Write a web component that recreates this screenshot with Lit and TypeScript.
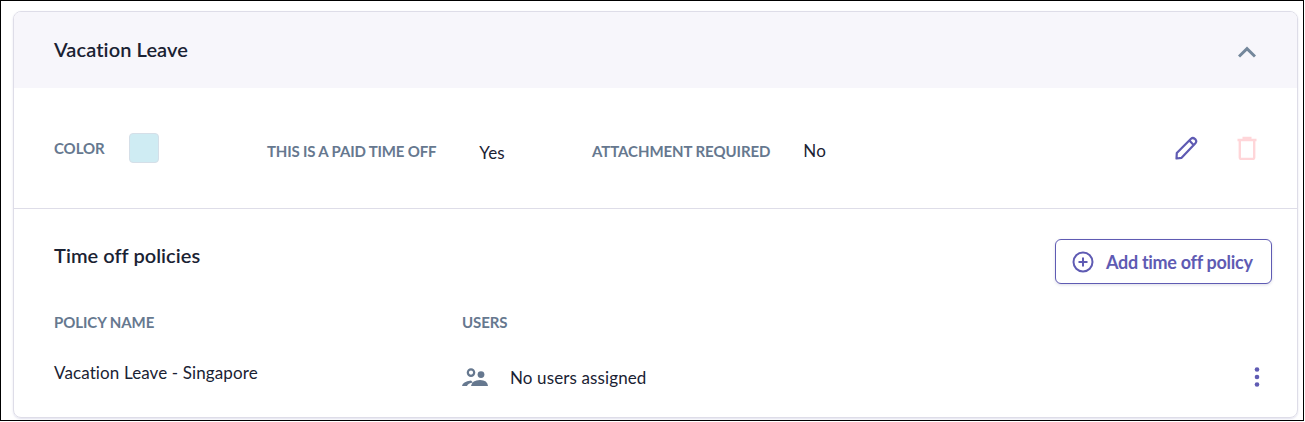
import { LitElement, html, css } from "lit";
import { customElement } from "lit/decorators.js";

@customElement("app-root")
export class AppRoot extends LitElement {
  static styles = css`
    :host {
      display: block;
      width: 1305px;
      height: 422px;
      overflow: hidden;
      background: #fff;
      font-family: Lato, "Liberation Sans", sans-serif;
      color: #1a2233;
    }
    .frame {
      box-sizing: border-box;
      width: 1304px;
      height: 421px;
      border: 1px solid #000;
      padding: 10px 5px 2px 12px;
    }
    .card {
      box-sizing: border-box;
      height: 407px;
      border: 1px solid #dedde8;
      border-radius: 8px;
      box-shadow: 0 1px 2px rgba(90, 90, 160, 0.18);
      overflow: hidden;
      display: flex;
      flex-direction: column;
    }
    .head {
      height: 76px;
      flex: none;
      background: #f7f6fb;
      display: flex;
      align-items: center;
      justify-content: space-between;
      padding: 0 41px 0 40px;
    }
    h2 {
      margin: 0 0 3px;
      font-size: 20px;
      line-height: 24px;
      letter-spacing: 0.1px;
      font-weight: 600;
    }
    .chev { margin-top: 4px; }
    .info {
      height: 120px;
      flex: none;
      border-bottom: 1px solid #dedde8;
      display: flex;
      align-items: center;
      padding: 0 39px 0 40px;
    }
    .label {
      font-size: 15px;
      font-weight: 700;
      color: #66788f;
      line-height: 18px;
      letter-spacing: -0.08px;
      white-space: nowrap;
    }
    .value {
      font-size: 17px;
      line-height: 22px;
      letter-spacing: 0.12px;
      white-space: nowrap;
    }
    .swatch {
      width: 30px;
      height: 30px;
      box-sizing: border-box;
      border-radius: 4px;
      background: #cfecf3;
      border: 1px solid #d5dfe8;
    }
    .color { display: flex; gap: 24px; align-items: flex-start; width: 213px; }
    .color .label { margin-top: 6px; }
    .paid { display: flex; gap: 43px; align-items: center; width: 325px; margin-top: 6px; }
    .paid .label { letter-spacing: -0.17px; }
    .paid .value { margin-top: 3px; }
    .attach { display: flex; gap: 33px; align-items: center; margin-top: 5px; }
    .actions { margin-left: auto; display: flex; gap: 38px; align-items: center; margin-top: -1px; }
    svg { display: block; flex: none; }
    .policies { flex: 1; padding: 30px 25px 0 40px; display: flex; flex-direction: column; }
    .ptop { display: flex; justify-content: space-between; align-items: flex-start; }
    .ptop h3 { margin: 4px 0 0; font-size: 20px; line-height: 24px; font-weight: 600; letter-spacing: 0.05px; }
    .btn {
      box-sizing: border-box;
      width: 217px;
      height: 45px;
      border: 1px solid #5f5bb3;
      border-radius: 6px;
      background: #fff;
      box-shadow: 0 1px 3px rgba(60, 60, 120, 0.18);
      display: flex;
      align-items: center;
      padding: 0 0 0 16px;
      gap: 12px;
      color: #5f5bb3;
      font: 700 18px/24px Lato, sans-serif;
      letter-spacing: -0.3px;
    }
    .row { display: grid; grid-template-columns: 408px 1fr auto; }
    .hdr { margin-top: 29px; }
    .body { margin-top: 30px; align-items: center; padding-right: 12px; }
    .users { display: flex; align-items: center; gap: 22px; margin-top: 6px; }
    .name { margin-top: -4px; }
    .more { margin-top: 4px; }
  `;

  render() {
    return html`
      <div class="frame">
        <div class="card">
          <div class="head">
            <h2>Vacation Leave</h2>
            <svg class="chev" width="18" height="12" viewBox="0 0 18 12" fill="none" stroke="#74879b" stroke-width="3"><path d="M1 10.5 L9 2.6 L17 10.5"/></svg>
          </div>
          <div class="info">
            <div class="color"><span class="label">COLOR</span><div class="swatch"></div></div>
            <div class="paid"><span class="label">THIS IS A PAID TIME OFF</span><span class="value">Yes</span></div>
            <div class="attach"><span class="label">ATTACHMENT REQUIRED</span><span class="value">No</span></div>
            <div class="actions">
              <svg width="24" height="24" viewBox="0 0 24 24" fill="none" stroke="#5f5bb3" stroke-width="2.2" stroke-linejoin="round"><path d="M2.5 22.5 L2.8 17 L17 2.8 Q18.8 1.2 20.8 2.8 L21.6 3.6 Q23 5.4 21.4 7.2 L7.6 21.8 Z M15.4 4.6 L19.6 9"/></svg>
              <svg width="22" height="24" viewBox="0 0 22 24" fill="none" stroke="#ffd6d9" stroke-width="2.4"><path d="M3.8 5 V21.5 Q3.8 23 5.3 23 H16.7 Q18.2 23 18.2 21.5 V5"/><path d="M1.5 4 H20.5"/><path d="M6.5 2 H15.5"/></svg>
            </div>
          </div>
          <div class="policies">
            <div class="ptop">
              <h3>Time off policies</h3>
              <div class="btn">
                <svg width="22" height="22" viewBox="0 0 22 22" fill="none" stroke="#5f5bb3" stroke-width="2"><circle cx="11" cy="11" r="9.5"/><path d="M11 6.5 V15.5 M6.5 11 H15.5"/></svg>
                <span>Add time off policy</span>
              </div>
            </div>
            <div class="row hdr"><span class="label">POLICY NAME</span><span class="label">USERS</span></div>
            <div class="row body">
              <span class="value name">Vacation Leave - Singapore</span>
              <div class="users">
                <svg width="26" height="20" viewBox="0 0 26 20" fill="#66788f"><circle cx="9" cy="4.6" r="3.2" fill="none" stroke="#66788f" stroke-width="2.2"/><circle cx="19" cy="6.6" r="3.4"/><path d="M0 18 Q.5 13.5 9 12.5 L11 14.5 Q6 15 5 18 Z"/><path d="M9 18 Q10 12 18 12 Q25.5 12 26 18 Z"/></svg>
                <span class="value">No users assigned</span>
              </div>
              <svg class="more" width="6" height="20" viewBox="0 0 6 20" fill="#5f5bb3"><circle cx="3" cy="2.5" r="2.3"/><circle cx="3" cy="10" r="2.3"/><circle cx="3" cy="17.5" r="2.3"/></svg>
            </div>
          </div>
        </div>
      </div>
    `;
  }
}
